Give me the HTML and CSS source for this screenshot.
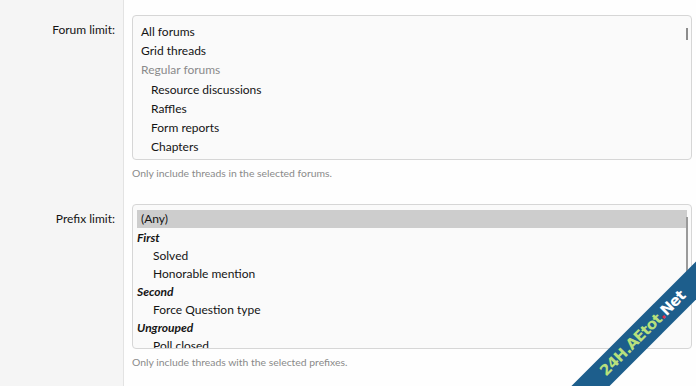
FILE: index.html
```html
<!DOCTYPE html>
<html>
<head>
<meta charset="utf-8">
<link rel="stylesheet" href="styles.css">
</head>
<body>
<div class="form">
  <div class="row row-first">
    <div class="label">Forum limit:</div>
    <div class="field">
      <div class="listbox forums">
        <div class="opt">All forums</div>
        <div class="opt">Grid threads</div>
        <div class="opt muted">Regular forums</div>
        <div class="opt sub">Resource discussions</div>
        <div class="opt sub">Raffles</div>
        <div class="opt sub">Form reports</div>
        <div class="opt sub">Chapters</div>
        <div class="thumb thumb-forums"></div>
      </div>
      <div class="hint">Only include threads in the selected forums.</div>
    </div>
  </div>
  <div class="row row-last">
    <div class="label">Prefix limit:</div>
    <div class="field">
      <div class="listbox prefixes">
        <div class="opt selected">(Any)</div>
        <div class="group">First</div>
        <div class="opt child">Solved</div>
        <div class="opt child">Honorable mention</div>
        <div class="group">Second</div>
        <div class="opt child">Force Question type</div>
        <div class="group">Ungrouped</div>
        <div class="opt child">Poll closed</div>
        <div class="thumb thumb-prefixes"></div>
      </div>
      <div class="hint">Only include threads with the selected prefixes.</div>
    </div>
  </div>
</div>
<div class="watermark"><span class="wm-a">24H.AEtot</span><span class="wm-dot">.</span><span class="wm-b">Net</span></div>
</body>
</html>
```
FILE: styles.css
```css
html, body {
  margin: 0;
  padding: 0;
  background: #fefefe;
  overflow: hidden;
}
body {
  width: 696px;
  height: 386px;
  position: relative;
  font-family: "Lato", "Liberation Sans", sans-serif;
  font-size: 12px;
  color: #141414;
}
.form {
  display: flex;
  flex-direction: column;
  height: 386px;
}
.row {
  display: flex;
}
.row-last {
  flex: 1;
}
.label {
  width: 115px;
  flex: none;
  padding-right: 8px;
  text-align: right;
  background: #f5f5f5;
  border-right: 1px solid #e3e3e3;
  line-height: 19px;
  color: #141414;
}
.row-first .label { padding-top: 20px; }
.row-last .label { padding-top: 20px; }
.field {
  flex: 1;
  padding: 15px 4px 9px 8px;
}
.listbox {
  position: relative;
  border: 1px solid #d6d6d6;
  border-radius: 4px;
  background: #fafafa;
  padding: 5px 4px 0 4px;
  box-sizing: content-box;
  overflow: hidden;
}
.listbox.forums { height: 137px; padding-top: 6px; }
.listbox.prefixes { height: 138px; }
.opt {
  padding-left: 4px;
  line-height: 19px;
  white-space: nowrap;
}
.forums .opt { line-height: 19.2px; }
.muted { color: #8a8a8a; }
.sub { padding-left: 14px; }
.prefixes .opt, .prefixes .group { line-height: 18px; }
.prefixes .selected {
  background: #cdcdcd;
  line-height: 18px;
  margin-bottom: 1px;
}
.group {
  font-weight: bold;
  font-style: italic;
  white-space: nowrap;
}
.child { padding-left: 16px; }
.thumb {
  position: absolute;
  right: 3px;
  width: 2px;
  background: #8c8c8c;
}
.thumb-forums { top: 12px; height: 12px; }
.thumb-prefixes { top: 12px; height: 62px; background: #9a9a9a; }
.hint {
  margin-top: 6px;
  font-size: 10.4px;
  line-height: 14px;
  color: #8a8a8a;
  white-space: nowrap;
}
.watermark {
  position: absolute;
  left: 553px;
  top: 320px;
  width: 180px;
  height: 27px;
  line-height: 27px;
  background: #1d5e8c;
  transform: rotate(-45deg);
  text-align: center;
  font-family: "DejaVu Sans", sans-serif;
  font-weight: bold;
  font-size: 15px;
  letter-spacing: -0.6px;
}
.wm-a { color: #b8e07c; }
.wm-dot { color: #e0304a; }
.wm-b { color: #ffffff; }
```
